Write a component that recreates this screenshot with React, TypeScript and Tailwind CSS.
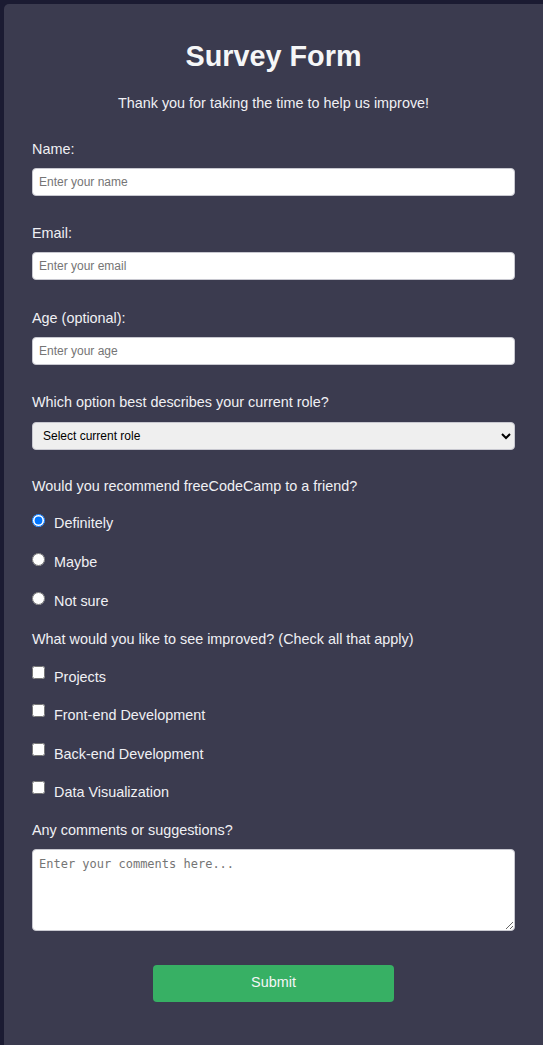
import React from "react";

const font = { fontFamily: '"Liberation Sans", Arial, sans-serif' };

function Radio({ label, checked }: { label: string; checked?: boolean }) {
  return (
    <label className="flex items-start h-6 leading-6 text-[14.4px]">
      <input
        type="radio"
        name="recommend"
        defaultChecked={checked}
        className="m-0 mt-[3px] w-[13px] h-[13px] mr-[9px] shrink-0"
      />
      <span>{label}</span>
    </label>
  );
}

function Check({ label }: { label: string }) {
  return (
    <label className="flex items-start h-6 leading-6 text-[14.4px]">
      <input
        type="checkbox"
        className="m-0 mt-[1px] w-[13px] h-[13px] mr-[9px] shrink-0"
      />
      <span>{label}</span>
    </label>
  );
}

export default function App() {
  return (
    <div className="min-h-screen bg-[#1b1b32] pl-1 pt-1 flex" style={font}>
      <div className="flex-1 bg-[#3b3b4f] rounded-tl-[5px] px-[28px] pt-[35px] pb-[40px] text-[#f0f0f4]">
        <h1 className="text-center text-[28.8px] leading-[34px] font-bold text-[#f5f6f7]">
          Survey Form
        </h1>
        <p className="text-center text-[14.4px] leading-6 mt-[18px]">
          Thank you for taking the time to help us improve!
        </p>

        <div className="mt-[22px] flex flex-col gap-[25.25px]">
          <div>
            <div className="text-[14.4px] leading-6 mb-[7px]">Name:</div>
            <input
              type="text"
              placeholder="Enter your name"
              className="block w-full h-[28px] bg-white rounded-[4px] border border-[#c8c8d0] px-[6px] text-[12px] text-black placeholder:text-[#757575]"
            />
          </div>
          <div>
            <div className="text-[14.4px] leading-6 mb-[7px]">Email:</div>
            <input
              type="email"
              placeholder="Enter your email"
              className="block w-full h-[28px] bg-white rounded-[4px] border border-[#c8c8d0] px-[6px] text-[12px] text-black placeholder:text-[#757575]"
            />
          </div>
          <div>
            <div className="text-[14.4px] leading-6 mb-[7px]">Age (optional):</div>
            <input
              type="number"
              placeholder="Enter your age"
              className="block w-full h-[28px] bg-white rounded-[4px] border border-[#c8c8d0] px-[6px] text-[12px] text-black placeholder:text-[#757575]"
            />
          </div>
          <div>
            <div className="text-[14.4px] leading-6 mb-[8px]">
              Which option best describes your current role?
            </div>
            <select className="block w-full h-[28px] bg-[#efefef] rounded-[4px] border border-[#c8c8d0] px-[6px] text-[12px] text-black">
              <option>Select current role</option>
              <option>Student</option>
              <option>Full Time Job</option>
              <option>Full Time Learner</option>
              <option>Prefer not to say</option>
              <option>Other</option>
            </select>
          </div>
        </div>

        <div className="mt-[24.5px] text-[14.4px] leading-6">
          Would you recommend freeCodeCamp to a friend?
        </div>
        <div className="mt-[13px] flex flex-col gap-[15px]">
          <Radio label="Definitely" checked />
          <Radio label="Maybe" />
          <Radio label="Not sure" />
        </div>

        <div className="mt-[13.5px] text-[14.4px] leading-6">
          What would you like to see improved? (Check all that apply)
        </div>
        <div className="mt-[14px] flex flex-col gap-[14.5px]">
          <Check label="Projects" />
          <Check label="Front-end Development" />
          <Check label="Back-end Development" />
          <Check label="Data Visualization" />
        </div>

        <div className="mt-[13.5px] text-[14.4px] leading-6 mb-[7px]">
          Any comments or suggestions?
        </div>
        <textarea
          placeholder="Enter your comments here..."
          className="block w-full h-[82px] bg-white rounded-[4px] border border-[#c8c8d0] px-[6px] py-[5px] text-[12px] text-black placeholder:text-[#757575]"
          style={{ fontFamily: '"DejaVu Sans Mono", monospace' }}
        />

        <div className="mt-[34px] flex justify-center">
          <button
            type="button"
            className="w-[241px] h-[37px] rounded-[4px] bg-[#37b064] text-[#f5f6f7] text-[14.4px]"
          >
            Submit
          </button>
        </div>
      </div>
    </div>
  );
}
